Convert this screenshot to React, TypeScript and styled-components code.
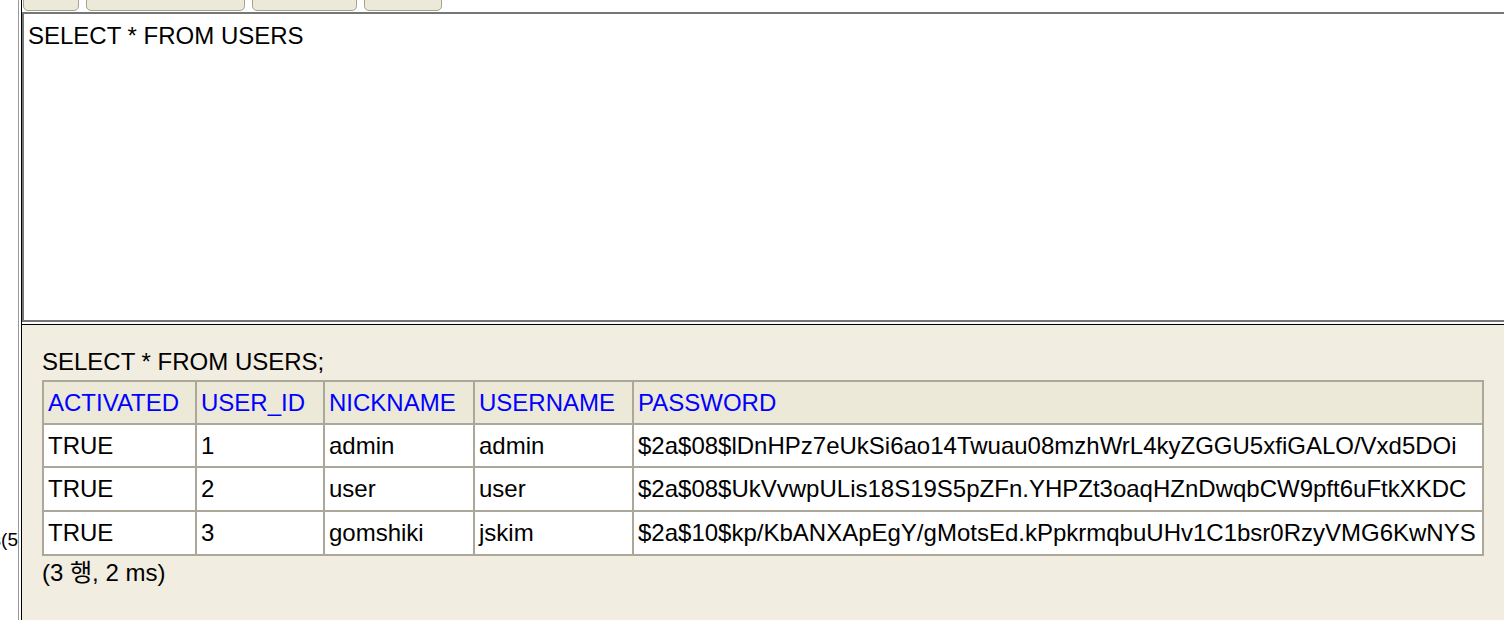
import styled, { createGlobalStyle } from 'styled-components';

const GlobalStyle = createGlobalStyle`
  html, body {
    margin: 0;
    padding: 0;
    background: #fff;
    overflow: hidden;
  }
  body {
    font-family: 'Liberation Sans', Arial, 'Noto Sans CJK KR', sans-serif;
    font-size: 24px;
    color: #000;
  }
`;

type Row = {
  activated: string;
  userId: number;
  nickname: string;
  username: string;
  password: string;
};

const columns = [
  { name: 'ACTIVATED', width: 153 },
  { name: 'USER_ID', width: 128 },
  { name: 'NICKNAME', width: 150 },
  { name: 'USERNAME', width: 159 },
  { name: 'PASSWORD', width: 850 },
];

const rows: Row[] = [
  {
    activated: 'TRUE',
    userId: 1,
    nickname: 'admin',
    username: 'admin',
    password: '$2a$08$lDnHPz7eUkSi6ao14Twuau08mzhWrL4kyZGGU5xfiGALO/Vxd5DOi',
  },
  {
    activated: 'TRUE',
    userId: 2,
    nickname: 'user',
    username: 'user',
    password: '$2a$08$UkVvwpULis18S19S5pZFn.YHPZt3oaqHZnDwqbCW9pft6uFtkXKDC',
  },
  {
    activated: 'TRUE',
    userId: 3,
    nickname: 'gomshiki',
    username: 'jskim',
    password: '$2a$10$kp/KbANXApEgY/gMotsEd.kPpkrmqbuUHv1C1bsr0RzyVMG6KwNYS',
  },
];

const toolbarButtons = [
  { label: 'Run', width: 56 },
  { label: 'Run Selected', width: 159 },
  { label: 'Auto complete', width: 105 },
  { label: 'Clear', width: 78 },
];

const App = () => {
  return (
    <>
      <GlobalStyle />
      <Frameset>
        <TreeFrame>
          <TreeLine>users(5</TreeLine>
        </TreeFrame>

        <MainFrame>
          <QueryFrame>
            <Toolbar>
              {toolbarButtons.map(b => (
                <ToolButton key={b.label} $width={b.width} aria-label={b.label} />
              ))}
            </Toolbar>
            <Editor readOnly spellCheck={false} defaultValue='SELECT * FROM USERS' />
          </QueryFrame>

          <ResultFrame>
            <Statement>SELECT * FROM USERS;</Statement>
            <ResultTable>
              <thead>
                <tr>
                  {columns.map(c => (
                    <HeadCell key={c.name} $width={c.width}>
                      <ColumnLink href='#'>{c.name}</ColumnLink>
                    </HeadCell>
                  ))}
                </tr>
              </thead>
              <tbody>
                {rows.map(r => (
                  <tr key={r.userId}>
                    <Cell>{r.activated}</Cell>
                    <Cell>{r.userId}</Cell>
                    <Cell>{r.nickname}</Cell>
                    <Cell>{r.username}</Cell>
                    <Cell>{r.password}</Cell>
                  </tr>
                ))}
              </tbody>
            </ResultTable>
            <Summary>(3 행, 2 ms)</Summary>
          </ResultFrame>
        </MainFrame>
      </Frameset>
    </>
  );
};

const Frameset = styled.div`
  display: flex;
  height: 620px;
  width: 1504px;
  overflow: hidden;
`;

// left tree frame, scrolled so only the tail of one node shows
const TreeFrame = styled.div`
  flex: 0 0 18px;
  border-right: 1px solid #9a9a9a;
  overflow: hidden;
  display: flex;
  flex-direction: column;
  align-items: flex-end;
  padding-top: 529px;
`;

const TreeLine = styled.div`
  white-space: nowrap;
  font-size: 19px;
  line-height: 22px;
`;

const MainFrame = styled.div`
  flex: 1;
  min-width: 0;
  margin-left: 2px;
  border-left: 1px solid #000;
  display: flex;
  flex-direction: column;
  overflow: hidden;
`;

const QueryFrame = styled.div`
  flex: 0 0 auto;
  background: #fff;
  padding-bottom: 2px;
`;

const Toolbar = styled.div`
  height: 12px;
  display: flex;
  align-items: flex-end;
  gap: 7px;
  padding-left: 1px;
  overflow: hidden;
`;

const ToolButton = styled.button<{ $width: number }>`
  flex: 0 0 ${({ $width }) => $width}px;
  height: 30px;
  margin-bottom: 1px;
  padding: 0;
  background: #ece9d8;
  border: 1px solid #a4a190;
  border-radius: 5px;
  box-sizing: border-box;
`;

const Editor = styled.textarea`
  display: block;
  width: 1500px;
  height: 310px;
  margin: 0;
  padding: 8px 4px;
  box-sizing: border-box;
  border: 2px solid #767676;
  font-family: 'Liberation Sans', Arial, sans-serif;
  font-size: 24px;
  line-height: normal;
  color: #000;
  background: #fff;
  resize: none;
  overflow: hidden;
  outline: none;
`;

const ResultFrame = styled.div`
  flex: 1;
  border-top: 1px solid #000;
  background: #f1ede0;
  padding: 23px 0 0 20px;
  display: flex;
  flex-direction: column;
  align-items: flex-start;
`;

const Statement = styled.div`
  line-height: 27.5px;
`;

const ResultTable = styled.table`
  margin-top: 4px;
  border-collapse: collapse;
  table-layout: fixed;
  width: 1440px;
  border: 2px solid #aca899;
`;

const HeadCell = styled.th<{ $width: number }>`
  width: ${({ $width }) => $width}px;
  box-sizing: border-box;
  background: #ece9d8;
  border: 2px solid #aca899;
  padding: 7px 4px;
  line-height: 27px;
  text-align: left;
  font-weight: normal;
  white-space: nowrap;
`;

const ColumnLink = styled.a`
  color: #0000ff;
  text-decoration: none;
`;

const Cell = styled.td`
  background: #fff;
  border: 2px solid #aca899;
  padding: 7px 4px;
  line-height: 27.67px;
  white-space: nowrap;
  overflow: hidden;
`;

const Summary = styled.div`
  margin-top: 3px;
  line-height: 27.5px;
`;

export default App;
